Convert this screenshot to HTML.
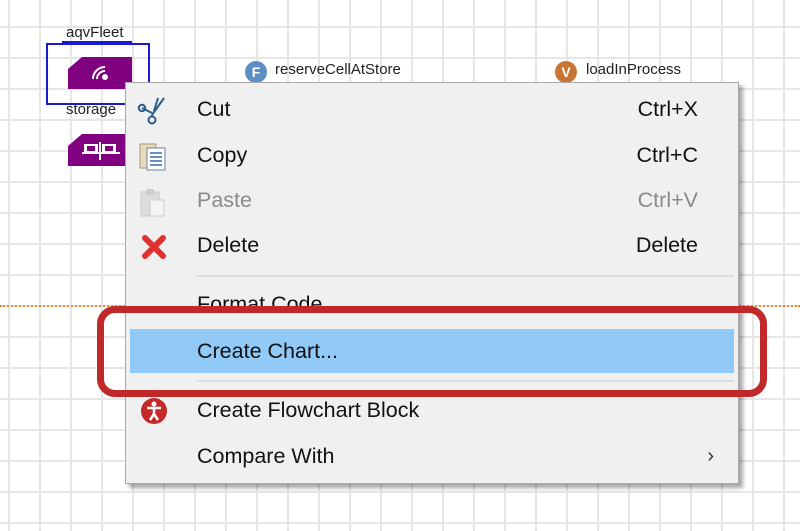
<!DOCTYPE html>
<html><head><style>
body{margin:0;width:800px;height:531px;overflow:hidden;position:relative;font-family:"Liberation Sans",sans-serif;
background-color:#fff;
background-image:linear-gradient(to right,#e6e6e6 2px,transparent 2px),linear-gradient(to bottom,#e6e6e6 2px,transparent 2px);
background-size:31px 31px;background-position:8px 26px;}
.abs{position:absolute}
.lbl{position:absolute;font-size:15px;color:#222;}
.menu{position:absolute;left:125px;top:82px;width:612px;height:400px;background:#f0f0f0;border:1px solid #a8a8a8;box-shadow:4px 4px 4px rgba(0,0,0,0.35);}
.it{position:absolute;left:71px;font-size:21.5px;color:#111;}
.sc{position:absolute;right:40px;font-size:21.5px;color:#111;}
.sep{position:absolute;left:71px;right:4px;height:2px;background:#dcdcdc;}
</style></head><body>
<div class="abs" style="left:0;top:305px;width:800px;border-top:2px dotted #e0903a"></div>
<div class="lbl" style="left:66px;top:24px">aqvFleet</div>
<div class="abs" style="left:46px;top:43px;width:104px;height:62px;border:2px solid #1a1ad0;box-sizing:border-box"></div>
<div class="abs" style="left:62px;top:41px;width:70px;height:3px;background:#1a1ad0"></div>
<svg class="abs" style="left:68px;top:57px" width="66" height="34"><polygon points="14,0 64,0 64,32 0,32 0,12" fill="#800080"/><circle cx="37" cy="20" r="3" fill="#fff"/><path d="M29,22a8,8 0 0 1 8,-8M25,22a12,12 0 0 1 12,-12" stroke="#fff" stroke-width="2" fill="none"/></svg>
<div class="lbl" style="left:66px;top:101px">storage</div>
<svg class="abs" style="left:68px;top:134px" width="66" height="34"><polygon points="14,0 64,0 64,32 0,32 0,12" fill="#800080"/><rect x="16" y="10" width="14" height="10" fill="#fff"/><rect x="34" y="10" width="14" height="10" fill="#fff"/><rect x="14" y="18" width="38" height="2" fill="#fff"/><rect x="31" y="8" width="2" height="18" fill="#fff"/><rect x="19" y="12" width="8" height="5" fill="#800080"/><rect x="37" y="12" width="8" height="5" fill="#800080"/></svg>
<svg class="abs" style="left:245px;top:61px" width="22" height="22"><circle cx="11" cy="11" r="11" fill="#5b8fc4"/><text x="11" y="16" font-size="14" font-weight="bold" fill="#fff" text-anchor="middle" font-family="Liberation Sans">F</text></svg>
<div class="lbl" style="left:275px;top:61px">reserveCellAtStore</div>
<svg class="abs" style="left:554px;top:61px" width="26" height="22"><circle cx="12" cy="11" r="11" fill="#c87533"/><text x="12" y="16" font-size="14" font-weight="bold" fill="#fff" text-anchor="middle" font-family="Liberation Sans">V</text></svg>
<div class="lbl" style="left:586px;top:61px">loadInProcess</div>

<div class="menu">
 <svg class="abs" style="left:10px;top:12px" width="34" height="34"><path d="M28,3 L16,20 M22,3 L18,16 M6,13 L16,18" stroke="#2c5e8c" stroke-width="2" fill="none"/><circle cx="6" cy="13" r="3.2" stroke="#2c5e8c" stroke-width="2" fill="none"/><circle cx="16" cy="25" r="3.5" stroke="#2c5e8c" stroke-width="2" fill="none"/><path d="M16,20 L16,21.5" stroke="#2c5e8c" stroke-width="2"/></svg>
 <div class="it" style="top:14px">Cut</div><div class="sc" style="top:14px">Ctrl+X</div>
 <svg class="abs" style="left:12px;top:58px" width="32" height="32"><rect x="2" y="3" width="16" height="24" fill="#e8dcc0" stroke="#a89870"/><rect x="9" y="7" width="18" height="22" fill="#fff" stroke="#6a7fa0"/><path d="M12,12h12M12,16h12M12,20h12M12,24h12" stroke="#3a6ab0" stroke-width="1.5"/></svg>
 <div class="it" style="top:60px">Copy</div><div class="sc" style="top:60px">Ctrl+C</div>
 <svg class="abs" style="left:12px;top:104px" width="32" height="32"><rect x="3" y="5" width="18" height="24" fill="#ddd" stroke="#ccc"/><rect x="8" y="2" width="8" height="6" fill="#ccc"/><rect x="12" y="13" width="14" height="16" fill="#f4f4f4" stroke="#ccc"/></svg>
 <div class="it" style="top:105px;color:#8a8a8a">Paste</div><div class="sc" style="top:105px;color:#8a8a8a">Ctrl+V</div>
 <svg class="abs" style="left:14px;top:150px" width="28" height="28"><path d="M5,5L23,23M23,5L5,23" stroke="#e03030" stroke-width="6" stroke-linecap="round"/></svg>
 <div class="it" style="top:150px">Delete</div><div class="sc" style="top:150px">Delete</div>
 <div class="sep" style="top:192px"></div>
 <div class="it" style="top:209px">Format Code</div>
 <div class="abs" style="left:4px;top:246px;width:604px;height:44px;background:#91c9f7"></div>
 <div class="it" style="top:256px">Create Chart...</div>
 <div class="sep" style="top:297px"></div>
 <svg class="abs" style="left:14px;top:314px" width="28" height="28"><circle cx="14" cy="14" r="13" fill="#c62828"/><circle cx="14" cy="7" r="2.5" fill="#fff"/><path d="M7,11h14M14,11v6M14,17l-4,6M14,17l4,6" stroke="#fff" stroke-width="2.5" fill="none"/></svg>
 <div class="it" style="top:315px">Create Flowchart Block</div>
 <div class="it" style="top:361px">Compare With</div>
 <div class="abs" style="right:24px;top:362px;font-size:20px;color:#333">›</div>
</div>
<div class="abs" style="left:97px;top:306px;width:670px;height:91px;border:7px solid #c0282a;border-radius:18px;box-sizing:border-box"></div>
</body></html>
